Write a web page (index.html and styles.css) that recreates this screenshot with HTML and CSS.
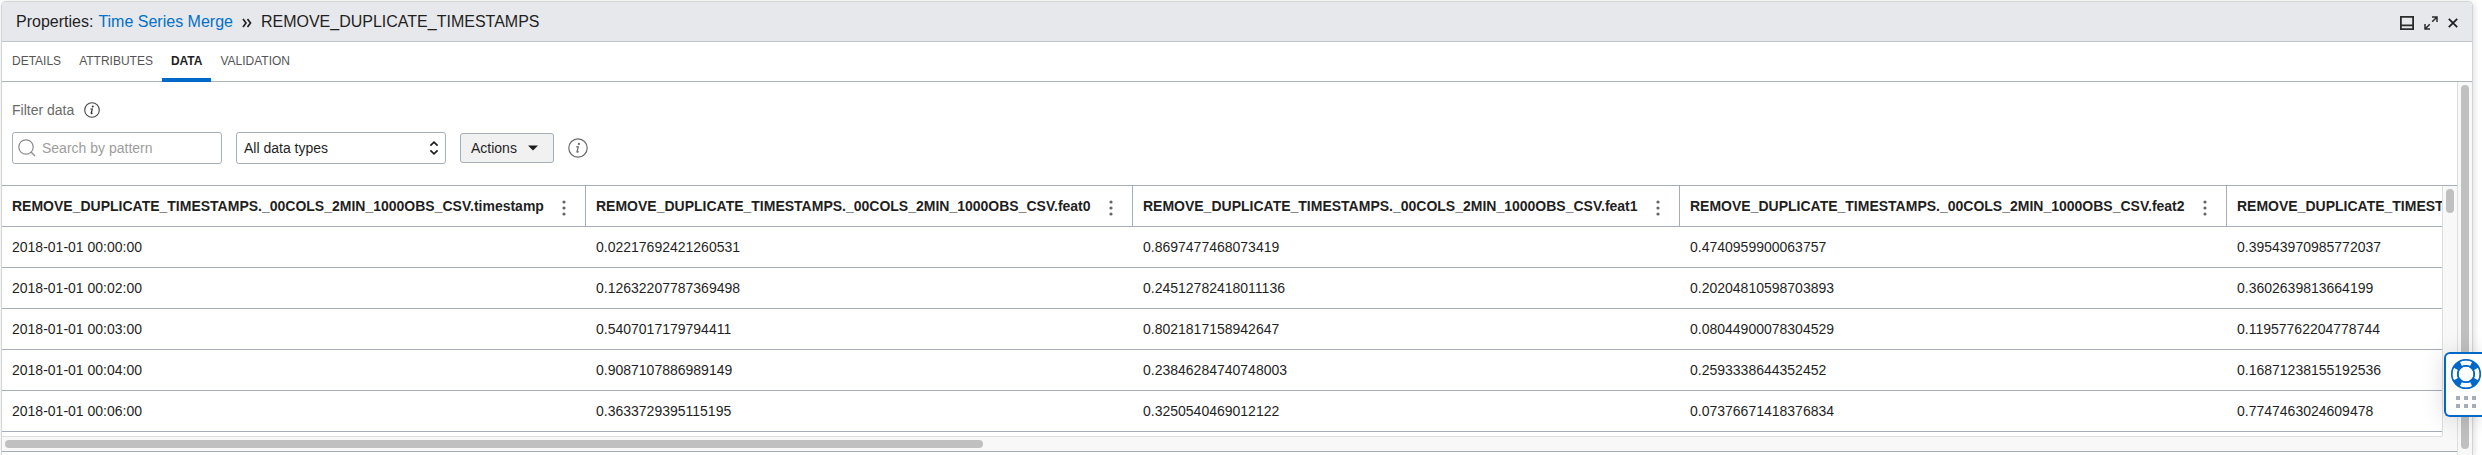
FILE: index.html
```html
<!DOCTYPE html>
<html lang="en">
<head>
<meta charset="utf-8">
<title>Properties</title>
<link rel="stylesheet" href="styles.css">
</head>
<body>
<section class="panel">
  <header class="panel-header">
    <div class="crumbs">
      <span>Properties:</span>
      <a class="crumb-link" href="#">Time Series Merge</a>
      <svg class="crumb-sep" width="10" height="12" viewBox="0 0 10 12" fill="none" stroke="#222" stroke-width="1.7"><path d="M1 2l3 4-3 4M5.500 2l3 4-3 4"/></svg>
      <span>REMOVE_DUPLICATE_TIMESTAMPS</span>
    </div>
    <div class="window-controls">
      <button class="icon-button" type="button" aria-label="Dock"><svg width="14" height="14" viewBox="0 0 14 14" fill="none" stroke="#2b2b2b" stroke-width="1.800"><path d="M.9.900h12.200v12.200H.9zM1 9.400h12"/></svg></button>
      <button class="icon-button" type="button" aria-label="Expand"><svg width="14" height="14" viewBox="0 0 14 14" fill="none" stroke="#2b2b2b" stroke-width="1.500"><path d="M8 1h5v5M13 1L8.200 5.800M6 13H1V8M1 13l4.800-4.800"/></svg></button>
      <button class="icon-button" type="button" aria-label="Close"><svg width="10" height="10" viewBox="0 0 10 10" fill="none" stroke="#1c1c1c" stroke-width="1.700"><path d="M.8.800l8.400 8.400M9.200.800L.8 9.200"/></svg></button>
    </div>
  </header>

  <nav class="tabs">
    <a class="tab" href="#">DETAILS</a>
    <a class="tab" href="#">ATTRIBUTES</a>
    <a class="tab tab-active" href="#" aria-current="page">DATA</a>
    <a class="tab" href="#">VALIDATION</a>
  </nav>

  <div class="panel-body">
    <main class="content">
      <div class="filters">
        <div class="filter-title">
          <label for="pattern">Filter data</label>
          <svg width="16" height="16" viewBox="0 0 16 16"><circle cx="8" cy="8" r="7.300" fill="none" stroke="#444" stroke-width="1.100"/><circle cx="8.800" cy="4.500" r="1" fill="#333"/><path d="M6.400 7h1.900L7.200 11.200q-.2.900 1.400-.1" fill="none" stroke="#333" stroke-width="1.200"/></svg>
        </div>
        <div class="filter-row">
          <div class="search">
            <svg class="search-icon" width="18" height="18" viewBox="0 0 18 18" fill="none" stroke="#8b8b8b" stroke-width="1.200"><circle cx="8" cy="8" r="7.200"/><path d="M13 13l4 4"/></svg>
            <input class="search-input" id="pattern" type="text" placeholder="Search by pattern">
          </div>
          <div class="type-picker">
            <select class="type-select" aria-label="Data type"><option>All data types</option></select>
            <svg class="type-arrows" width="10" height="14" viewBox="0 0 10 14" fill="none" stroke="#1c1c1c" stroke-width="1.700"><path d="M1.400 4.600L5 1.200l3.600 3.400M1.400 9.400L5 12.800l3.600-3.400"/></svg>
          </div>
          <button class="actions" type="button">Actions <svg width="10" height="6" viewBox="0 0 10 6"><path d="M0 .500h10L5 5.600z" fill="#1c1c1c"/></svg></button>
          <svg width="20" height="20" viewBox="0 0 20 20"><circle cx="10" cy="10" r="9.200" fill="none" stroke="#6a6a6a" stroke-width="1.200"/><circle cx="10.900" cy="5.900" r="1.100" fill="#666"/><path d="M8.200 8.800h2.100L9 13.700q-.2 1.100 1.700-.1" fill="none" stroke="#666" stroke-width="1.200"/></svg>
        </div>
      </div>

      <div class="grid">
        <div class="grid-view">
          <table class="data">
            <colgroup><col class="col-time"><col class="col-feat"><col class="col-feat"><col class="col-feat"><col class="col-feat"></colgroup>
            <thead>
              <tr>
                <th><div class="head">REMOVE_DUPLICATE_TIMESTAMPS._00COLS_2MIN_1000OBS_CSV.timestamp<button class="icon-button" type="button" aria-label="Column menu"><svg width="4" height="16" viewBox="0 0 4 16" fill="#666"><circle cx="2" cy="2" r="1.600"/><circle cx="2" cy="8" r="1.600"/><circle cx="2" cy="14" r="1.600"/></svg></button></div></th>
                <th><div class="head">REMOVE_DUPLICATE_TIMESTAMPS._00COLS_2MIN_1000OBS_CSV.feat0<button class="icon-button" type="button" aria-label="Column menu"><svg width="4" height="16" viewBox="0 0 4 16" fill="#666"><circle cx="2" cy="2" r="1.600"/><circle cx="2" cy="8" r="1.600"/><circle cx="2" cy="14" r="1.600"/></svg></button></div></th>
                <th><div class="head">REMOVE_DUPLICATE_TIMESTAMPS._00COLS_2MIN_1000OBS_CSV.feat1<button class="icon-button" type="button" aria-label="Column menu"><svg width="4" height="16" viewBox="0 0 4 16" fill="#666"><circle cx="2" cy="2" r="1.600"/><circle cx="2" cy="8" r="1.600"/><circle cx="2" cy="14" r="1.600"/></svg></button></div></th>
                <th><div class="head">REMOVE_DUPLICATE_TIMESTAMPS._00COLS_2MIN_1000OBS_CSV.feat2<button class="icon-button" type="button" aria-label="Column menu"><svg width="4" height="16" viewBox="0 0 4 16" fill="#666"><circle cx="2" cy="2" r="1.600"/><circle cx="2" cy="8" r="1.600"/><circle cx="2" cy="14" r="1.600"/></svg></button></div></th>
                <th><div class="head">REMOVE_DUPLICATE_TIMESTAMPS</div></th>
              </tr>
            </thead>
            <tbody>
              <tr><td>2018-01-01 00:00:00</td><td>0.02217692421260531</td><td>0.8697477468073419</td><td>0.4740959900063757</td><td>0.39543970985772037</td></tr>
              <tr><td>2018-01-01 00:02:00</td><td>0.12632207787369498</td><td>0.24512782418011136</td><td>0.20204810598703893</td><td>0.3602639813664199</td></tr>
              <tr><td>2018-01-01 00:03:00</td><td>0.5407017179794411</td><td>0.8021817158942647</td><td>0.08044900078304529</td><td>0.11957762204778744</td></tr>
              <tr><td>2018-01-01 00:04:00</td><td>0.9087107886989149</td><td>0.23846284740748003</td><td>0.2593338644352452</td><td>0.16871238155192536</td></tr>
              <tr><td>2018-01-01 00:06:00</td><td>0.3633729395115195</td><td>0.3250540469012122</td><td>0.07376671418376834</td><td>0.7747463024609478</td></tr>
            </tbody>
          </table>
        </div>
        <div class="track track-v"><div class="thumb thumb-grid"></div></div>
        <div class="track-h"><div class="thumb thumb-h"></div></div>
        <div class="corner"></div>
      </div>
    </main>
    <div class="track track-v"><div class="thumb thumb-panel"></div></div>
  </div>
</section>

<button class="help" type="button" aria-label="Help">
  <svg width="32" height="32" viewBox="0 0 32 32" fill="none"><circle cx="16" cy="16" r="11" stroke="#0068c8" stroke-width="7"/><g stroke="#fff" stroke-width="4.600"><path d="M10.900 5.900a11.300 11.300 0 0 1 10.200 0M26.100 10.900a11.300 11.300 0 0 1 0 10.200M21.100 26.100a11.300 11.300 0 0 1-10.200 0M5.900 21.100a11.300 11.300 0 0 1 0-10.200"/></g><circle cx="16" cy="16" r="14.300" stroke="#0068c8" stroke-width="1.500"/><circle cx="16" cy="16" r="8.300" stroke="#0068c8" stroke-width="1.500"/></svg>
  <svg width="20" height="12" viewBox="0 0 20 12" fill="#a5adb8"><path d="M0 0h4v4H0zM8 0h4v4H8zM16 0h4v4h-4zM0 8h4v4H0zM8 8h4v4H8zM16 8h4v4h-4z"/></svg>
</button>
</body>
</html>
```
FILE: styles.css
```css
* {
  box-sizing: border-box;
}

body {
  margin: 0;
  height: 100vh;
  overflow: hidden;
  padding: 1px 9px 0 1px;
  background: #fff;
  color: #1f1f1f;
  font: 14px/20px "Liberation Sans", Arial, sans-serif;
}

button,
input,
select {
  font: inherit;
  color: inherit;
}

svg {
  display: block;
  flex: none;
}

.panel {
  display: flex;
  flex-direction: column;
  height: 100%;
  border: 1px solid #d2d5d4;
  border-bottom: 0;
  border-radius: 5px 5px 0 0;
  box-shadow: 1px 1px 6px rgba(0, 0, 0, 0.14);
}

.panel-header {
  display: flex;
  align-items: center;
  justify-content: space-between;
  height: 40px;
  padding: 0 14px;
  border-bottom: 1px solid #c2c6cb;
  border-radius: 4px 4px 0 0;
  background: #e7e8ec;
}

.crumbs {
  display: flex;
  align-items: center;
  gap: 5px;
  font-size: 16px;
}

.crumb-link {
  color: #0070c8;
  text-decoration: none;
}

.crumb-sep {
  margin: 3px 4px 0;
}

.window-controls {
  display: flex;
  align-items: center;
  gap: 10px;
  padding-top: 3px;
}

.icon-button {
  padding: 0;
  border: 0;
  background: none;
}

.tabs {
  display: flex;
  flex: none;
  height: 40px;
  padding-left: 1px;
  border-bottom: 1px solid #adb3bb;
}

.tab {
  height: 40px;
  padding: 0 9px;
  color: #555;
  font-size: 12px;
  line-height: 38px;
  text-decoration: none;
}

.tab-active {
  border-bottom: 4px solid #0068c8;
  color: #1f1f1f;
  font-weight: bold;
}

.panel-body {
  display: flex;
  flex: 1;
  min-height: 0;
}

.content {
  flex: 1;
  min-width: 0;
}

.filters {
  padding: 18px 10px 21px;
}

.filter-title {
  display: flex;
  align-items: center;
  gap: 10px;
  margin-bottom: 12px;
  color: #6a6a6a;
}

.filter-row {
  display: flex;
  align-items: center;
  gap: 14px;
}

.search {
  display: flex;
  align-items: center;
  gap: 6px;
  width: 210px;
  height: 32px;
  padding: 0 5px;
  border: 1px solid #a5adb8;
  border-radius: 3px;
}

.search-input {
  flex: 1;
  min-width: 0;
  padding: 0;
  border: 0;
  background: none;
  outline: 0;
}

.search-input::placeholder {
  color: #9d9d9d;
}

.type-picker {
  position: relative;
  width: 210px;
}

.type-select {
  display: block;
  width: 100%;
  height: 32px;
  padding: 0 7px;
  border: 1px solid #a5adb8;
  border-radius: 3px;
  background: #fff;
  appearance: none;
}

.type-arrows {
  position: absolute;
  top: 9px;
  right: 7px;
  pointer-events: none;
}

.actions {
  display: flex;
  align-items: center;
  gap: 11px;
  height: 30px;
  padding: 0 15px 0 10px;
  border: 1px solid #a5adb8;
  border-radius: 3px;
  background: #f1f1f1;
}

.grid {
  display: grid;
  grid-template-columns: minmax(0, 1fr) 15px;
  grid-template-rows: auto 15px;
  border-top: 1px solid #a5adb8;
  border-bottom: 1px solid #a5adb8;
}

.grid-view {
  overflow: hidden;
  padding-bottom: 4px;
}

.data {
  width: 2772px;
  border-spacing: 0;
  table-layout: fixed;
}

.col-time {
  width: 584px;
}

.col-feat {
  width: 547px;
}

.data th,
.data td {
  height: 41px;
  padding: 0 10px;
  border-bottom: 1px solid #a5adb8;
  text-align: left;
  white-space: nowrap;
}

.data th {
  padding-right: 19px;
  border-right: 1px solid #a5adb8;
}

.head {
  display: flex;
  align-items: center;
  justify-content: space-between;
}

.head .icon-button {
  padding-top: 4px;
}

.track {
  padding: 3px;
  border-left: 1px solid #dedede;
  background: #f8f8f8;
}

.track-v {
  width: 15px;
}

.track-h {
  padding: 3px;
  border-top: 1px solid #dedede;
  background: #f8f8f8;
}

.corner {
  background: #f8f8f8;
}

.thumb {
  width: 8px;
  border-radius: 4px;
  background: #c0c0c0;
}

.thumb-grid {
  height: 24px;
}

.thumb-panel {
  height: calc(100% - 3px);
}

.thumb-h {
  width: 40.2%;
  height: 8px;
}

.help {
  position: absolute;
  top: 352px;
  right: 0;
  display: flex;
  flex-direction: column;
  align-items: center;
  gap: 6px;
  width: 38px;
  height: 65px;
  padding: 4px 0 0 4px;
  border: 2px solid #0068c8;
  border-right: 0;
  border-radius: 6px 0 0 6px;
  background: #fff;
  box-shadow: 0 2px 24px rgba(0, 0, 0, 0.14);
}
```
